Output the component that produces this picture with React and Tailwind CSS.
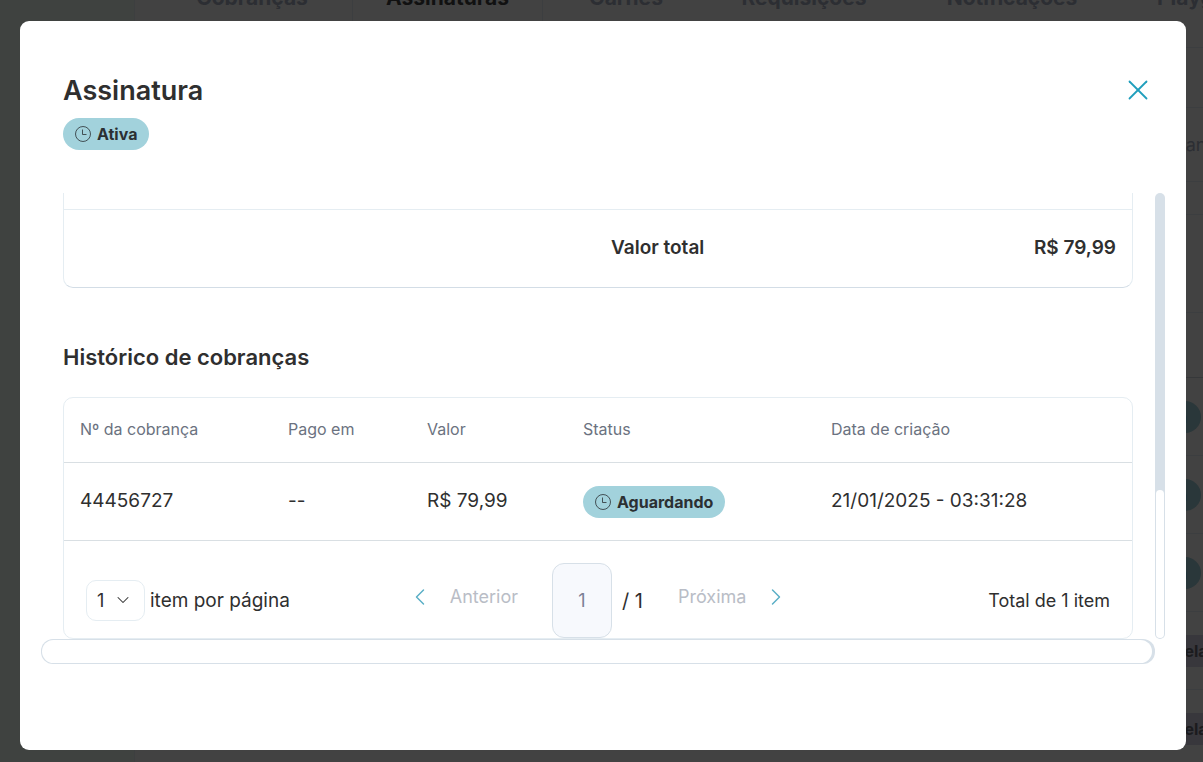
import React, { useState } from "react";
import { ChevronDown, ChevronLeft, ChevronRight, X } from "lucide-react";

const charges = [
  {
    id: "44456727",
    paidAt: "--",
    value: "R$ 79,99",
    status: "Aguardando",
    createdAt: "21/01/2025 - 03:31:28",
  },
];

function ClockIcon() {
  return (
    <svg
      viewBox="0 0 16 16"
      className="size-4 shrink-0"
      fill="none"
      stroke="currentColor"
      strokeWidth="0.8"
      aria-hidden="true"
    >
      <circle cx="8" cy="8" r="7.5" />
      <path d="M7.5 3.5v5h4" />
    </svg>
  );
}

function StatusBadge({ children }) {
  return (
    <span className="inline-flex h-8 items-center gap-1.5 rounded-full bg-[#a2d2dc] px-3 text-base font-bold text-[#2b3033]">
      <ClockIcon />
      {children}
    </span>
  );
}

// Subscriptions page that stays dimmed behind the dialog
function PageBehind() {
  return (
    <div className="fixed inset-0 flex overflow-hidden bg-[#424242] text-[#2c2e33]" aria-hidden="true">
      <div className="w-[134px] shrink-0 bg-[#3f4240]"></div>
      <div className="flex min-w-0 flex-1 flex-col border-l border-[#3d3f40]">
        <div className="-mt-10 flex h-[88px] shrink-0 border-b border-[#3c3e40] pl-[17px] text-[21px] leading-7 font-bold whitespace-nowrap">
          <div className="w-[201px] shrink-0 border-r border-[#3c3e40] pt-6 text-center">Cobranças</div>
          <div className="w-[190px] shrink-0 border-r border-[#3c3e40] pt-6 text-center text-[#111]">Assinaturas</div>
          <div className="w-[166px] shrink-0 pt-6 text-center">Carnês</div>
          <div className="w-[190px] shrink-0 pt-6 text-center">Requisições</div>
          <div className="w-[226px] shrink-0 pt-6 text-center">Notificações</div>
          <div className="shrink-0 pt-6 pl-8">Playground</div>
        </div>
        <div className="h-[60px] shrink-0 border-b border-[#3c3e40]"></div>
        <div className="-mr-6 flex h-[74px] shrink-0 items-center justify-end border-b border-[#3c3e40] text-lg">
          Cobrança
        </div>
        <div className="h-[33px] shrink-0 border-b border-[#3c3e40]"></div>
        <div className="h-[98px] shrink-0 border-b border-[#3c3e40]"></div>
        <div className="h-[65px] shrink-0 border-b border-[#36383a]"></div>
        {[1, 2, 3].map((row) => (
          <div key={row} className="flex h-[78px] shrink-0 items-center justify-end border-b border-[#3c3e40] pr-0.5">
            <span className="flex h-8 items-center rounded-full bg-[#2a373a] px-3.5 font-semibold text-[#0c0d0e]">Ativa</span>
          </div>
        ))}
        {[4, 5].map((row) => (
          <div key={row} className="-mr-9 flex h-[78px] shrink-0 items-center justify-end border-b border-[#3c3e40]">
            <span className="flex h-8 items-center bg-[#38373c] px-3 font-bold text-[#1b1b1e]">Cancelada</span>
          </div>
        ))}
      </div>
    </div>
  );
}

function TotalTable() {
  return (
    <div className="rounded-b-[10px] border border-t-0 border-b-[#d3dde6] border-[#e5edf2]">
      <div className="h-4"></div>
      <table className="w-full table-fixed border-t border-[#e5edf2] text-[19px] font-semibold">
        <tbody>
          <tr className="h-[77px]">
            <td className="w-[531px]"></td>
            <th scope="row" className="px-4 text-left font-semibold">
              Valor total
            </th>
            <td className="px-4 text-right">R$ 79,99</td>
          </tr>
        </tbody>
      </table>
    </div>
  );
}

function Pagination() {
  const [perPage, setPerPage] = useState("1");
  const [page, setPage] = useState("1");

  return (
    <div className="flex items-center px-[22px] pt-[22px] text-lg">
      <div className="flex w-[328px] items-center gap-[5px]">
        <div className="relative">
          <select
            id="per-page"
            value={perPage}
            onChange={(e) => setPerPage(e.target.value)}
            className="h-[41px] w-[59px] appearance-none rounded-[10px] border border-[#e5edf2] bg-white pl-2.5"
          >
            <option>1</option>
            <option>5</option>
            <option>10</option>
          </select>
          <ChevronDown
            size={20}
            strokeWidth={1.25}
            className="pointer-events-none absolute top-2.5 right-3"
            aria-hidden="true"
          />
        </div>
        <label htmlFor="per-page" className="text-[19px]">
          item por página
        </label>
      </div>
      <div className="flex items-center">
        <button type="button" className="-ml-2 flex w-[112px] items-center justify-between pb-2 text-[#b9bdc6]">
          <ChevronLeft size={28} strokeWidth={1.25} className="text-[#5aafc6]" />
          Anterior
        </button>
        <input
          type="text"
          aria-label="Página"
          value={page}
          onChange={(e) => setPage(e.target.value)}
          className="ml-[34px] h-[75px] w-[60px] rounded-xl border border-[#d7e0e8] bg-[#f7f9fd] text-center text-[#7b8096]"
        />
        <span className="ml-2.5 w-6 text-xl whitespace-nowrap">/ 1</span>
        <button type="button" className="ml-8 flex w-[112px] items-center justify-between pb-2 text-[#b9bdc6]">
          Próxima
          <ChevronRight size={28} strokeWidth={1.25} className="text-[#5aafc6]" />
        </button>
      </div>
      <div className="ml-auto">Total de 1 item</div>
    </div>
  );
}

function HistoryTable() {
  return (
    <div className="rounded-[10px] border border-[#e5edf2]">
      <table className="w-full table-fixed text-left">
        <thead>
          <tr className="h-[65px] border-b border-[#d9dfe3] text-base text-[#6b7280]">
            <th className="w-[208px] px-4 pb-0.5 font-normal">Nº da cobrança</th>
            <th className="w-[139px] px-4 pb-0.5 font-normal">Pago em</th>
            <th className="w-[156px] px-4 pb-0.5 font-normal">Valor</th>
            <th className="w-[248px] px-4 pb-0.5 font-normal">Status</th>
            <th className="px-4 pb-0.5 font-normal">Data de criação</th>
          </tr>
        </thead>
        <tbody>
          {charges.map((charge) => (
            <tr key={charge.id} className="h-[78px] border-b border-[#d9dfe3] text-[19px]">
              <td className="px-4">{charge.id}</td>
              <td className="px-4">{charge.paidAt}</td>
              <td className="px-4">{charge.value}</td>
              <td className="px-4">
                <div className="flex">
                  <StatusBadge>{charge.status}</StatusBadge>
                </div>
              </td>
              <td className="px-4">{charge.createdAt}</td>
            </tr>
          ))}
        </tbody>
      </table>
      <Pagination />
    </div>
  );
}

export default function App() {
  return (
    <div className="font-['Inter',sans-serif] text-[#2f2f2f]">
      <PageBehind />

      <div className="fixed inset-0 flex pt-[21px] pr-[17px] pb-3 pl-5">
        <div role="dialog" aria-labelledby="dialog-title" className="min-w-0 flex-1 rounded-[9px] bg-white px-[21px] pt-[51px]">
          {/* Header */}
          <div className="flex items-start justify-between px-[22px]">
            <div>
              <h1 id="dialog-title" className="mb-2 text-[27px] leading-[38px] font-semibold">
                Assinatura
              </h1>
              <div className="flex">
                <StatusBadge>Ativa</StatusBadge>
              </div>
            </div>
            <button type="button" aria-label="Fechar" className="-mr-3 pt-px text-[#1f9ebc]">
              <X size={34} strokeWidth={1.25} />
            </button>
          </div>

          {/* Scroll area with its two scrollbars */}
          <div className="mt-[43px] grid grid-cols-[1fr_10px]">
            <div className="px-[22px]">
              <TotalTable />
              <h2 className="mt-[53px] mb-6 text-[22px] leading-8 font-semibold">Histórico de cobranças</h2>
              <HistoryTable />
            </div>
            <div className="flex flex-col rounded-full bg-[#d7e0e8] p-px">
              <div className="basis-2/3"></div>
              <div className="basis-1/3 rounded-full bg-white"></div>
            </div>
            <div className="h-[25px] rounded-xl bg-[#d7e0e8] py-px pr-[3px] pl-px">
              <div className="h-full rounded-xl bg-white"></div>
            </div>
          </div>
        </div>
      </div>
    </div>
  );
}
